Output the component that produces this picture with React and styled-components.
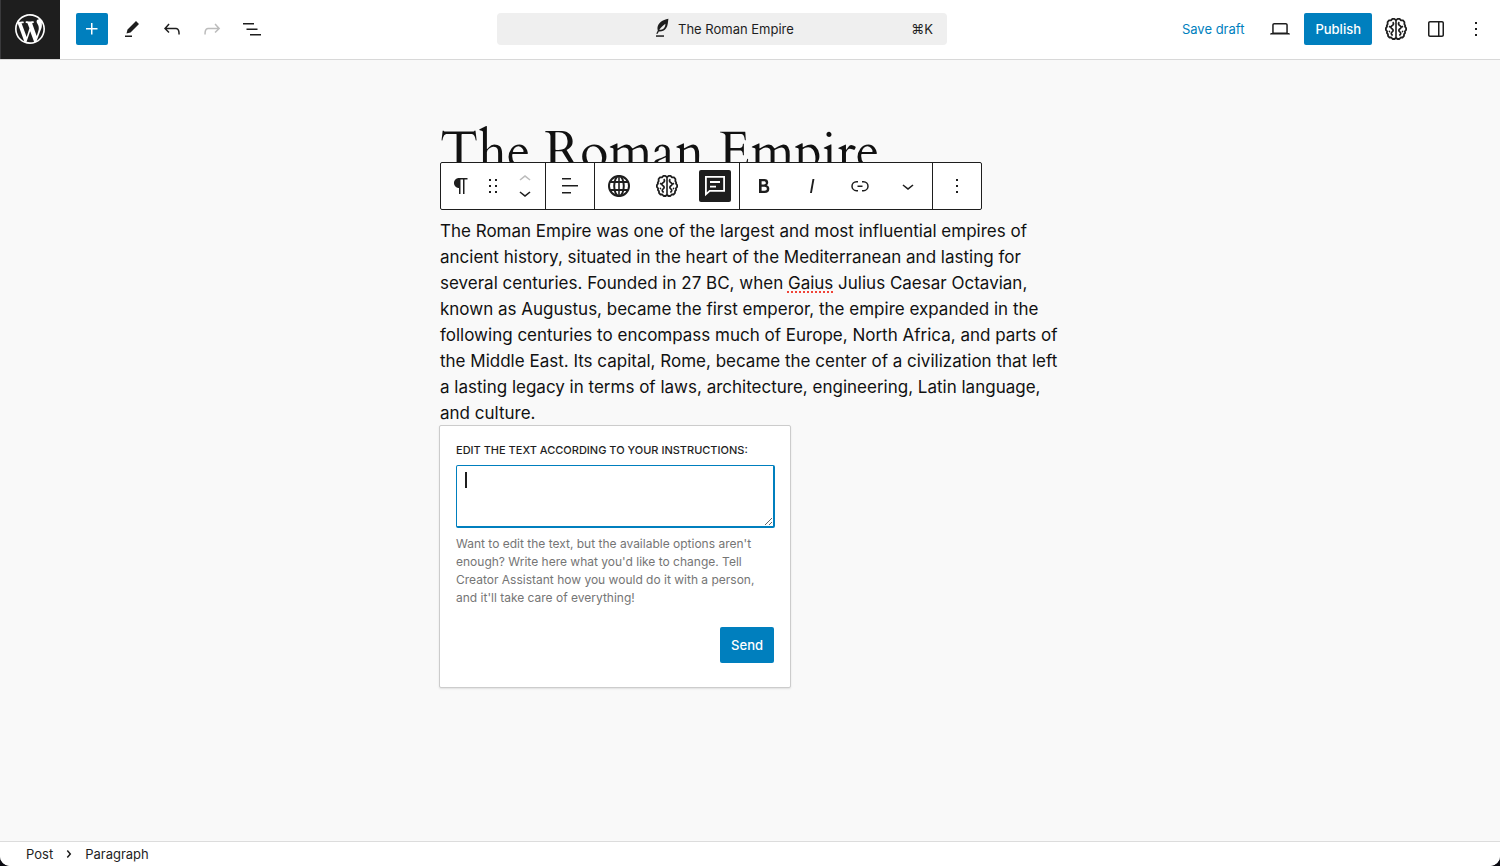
import React, { useState } from "react";
import styled, { createGlobalStyle, css } from "styled-components";

const ink = "#1e1e1e";
const accent = "#007fbe";
const ui = `Inter, "Liberation Sans", sans-serif`;

const GlobalStyle = createGlobalStyle`
  *, *::before, *::after { box-sizing: border-box; }
  body { margin: 0; background: #0b0b12; color: ${ink}; font-family: ${ui}; font-size: 13px; }
  button, textarea { font: inherit; color: inherit; }
`;

const Editor = styled.div`
  display: flex;
  flex-direction: column;
  min-height: 100vh;
  background: #f9f9f9;
  border-radius: 0 0 10px 10px;
  overflow: hidden;
`;

/* Top bar */

const Header = styled.header`
  display: flex;
  align-items: stretch;
  height: 60px;
  background: #fff;
  border-bottom: 1px solid #d8d8d8;
`;

const SiteLink = styled.a`
  display: flex;
  align-items: center;
  justify-content: center;
  flex: none;
  width: 60px;
  padding-bottom: 1px;
  background: ${ink};
  box-shadow: inset 1px 0 #3a3a3c;
  color: #fff;
`;

const Tools = styled.div`
  display: flex;
  align-items: center;
  gap: 8px;
  flex: none;
  padding: 0 ${(p) => (p.$end ? 8 : 0)}px 1px ${(p) => (p.$end ? 0 : 16)}px;
`;

const HeaderCenter = styled.div`
  display: flex;
  align-items: center;
  justify-content: center;
  flex: 1;
  min-width: 0;
  padding-bottom: 1px;
`;

const IconButton = styled.button`
  display: inline-flex;
  align-items: center;
  justify-content: center;
  flex: none;
  width: 32px;
  height: 32px;
  padding: 0;
  border: 0;
  border-radius: 2px;
  background: transparent;
  color: ${ink};
  cursor: pointer;

  &:disabled { color: #bcbcbc; cursor: default; }

  ${(p) => p.$primary && css`background: ${accent}; color: #fff;`}
  ${(p) => p.$active && css`background: ${ink}; color: #fff;`}
`;

const TextButton = styled.button`
  height: 32px;
  padding: 0 6px;
  margin-right: 6px;
  border: 0;
  background: transparent;
  color: ${accent};
  cursor: pointer;
`;

const PrimaryButton = styled.button`
  height: ${(p) => (p.$tall ? 36 : 32)}px;
  padding: 0 11px;
  border: 0;
  border-radius: 2px;
  background: ${accent};
  color: #fff;
  font-weight: 500;
  cursor: pointer;
`;

const DocumentBar = styled.button`
  display: grid;
  grid-template-columns: 1fr auto 1fr;
  align-items: center;
  width: 450px;
  min-width: 0;
  height: 32px;
  padding: 0 14px;
  border: 0;
  border-radius: 4px;
  background: #efefef;
  cursor: pointer;
`;

const DocumentName = styled.span`
  grid-column: 2;
  display: flex;
  align-items: center;
  gap: 4px;
`;

const Shortcut = styled.span`
  justify-self: end;
`;

/* Canvas */

const Canvas = styled.main`
  flex: 1;
  padding: 60px 24px;
`;

const Content = styled.div`
  max-width: 620px;
  margin: 0 auto;
`;

const Title = styled.h1`
  margin: 0 0 34px;
  color: #111;
  font-family: Cardo, "Liberation Serif", serif;
  font-size: 52px;
  font-weight: 400;
  line-height: 64px;
`;

const Block = styled.div`
  position: relative;
`;

const Paragraph = styled.p`
  margin: 0;
  color: #111;
  font-size: 17px;
  line-height: 26px;
`;

const Misspelled = styled.span`
  text-decoration: underline dotted #f04438 2px;
  text-underline-offset: 2px;
  text-decoration-skip-ink: none;
`;

/* Floating block toolbar */

const BlockToolbar = styled.div`
  position: absolute;
  left: 0;
  bottom: calc(100% + 8px);
  display: flex;
  height: 48px;
  border: 1px solid ${ink};
  border-radius: 2px;
  background: #fff;
`;

const Group = styled.div`
  display: flex;
  align-items: center;
  padding: 0 ${(p) => (p.$compact ? 4 : 8)}px;
  gap: ${(p) => (p.$compact ? 0 : 16)}px;

  & + & { border-left: 1px solid ${ink}; }
`;

const Movers = styled.div`
  display: flex;
  flex-direction: column;
`;

const MoverButton = styled(IconButton)`
  height: 14px;
`;

/* Instruction popover */

const Popover = styled.form`
  position: absolute;
  top: 100%;
  left: -1px;
  width: 352px;
  margin-top: -1px;
  padding: 16px 15px 24px 16px;
  border: 1px solid #ccc;
  border-radius: 2px;
  background: #fff;
  box-shadow: 0 1px 2px rgba(0, 0, 0, 0.1);
`;

const Label = styled.label`
  display: block;
  margin-bottom: 7px;
  font-size: 11px;
  font-weight: 500;
  line-height: 16px;
  text-transform: uppercase;
`;

const Field = styled.div`
  position: relative;
  display: flex;
`;

const TextArea = styled.textarea`
  width: 100%;
  height: 63px;
  padding: 6px 8px;
  border: 1px solid ${accent};
  border-right-width: 2px;
  border-bottom-width: 2px;
  border-radius: 2px;
  outline: 0;
  background: #fff;
  line-height: 18px;
  resize: vertical;
`;

const Caret = styled.span`
  position: absolute;
  top: 7px;
  left: 9px;
  width: 2px;
  height: 16px;
  background: ${ink};
  pointer-events: none;
`;

const Help = styled.p`
  margin: 7px 0 20px;
  color: #757575;
  font-size: 12px;
  line-height: 18px;
`;

const Actions = styled.div`
  display: flex;
  justify-content: flex-end;
  padding-right: 1px;
`;

/* Footer */

const Breadcrumb = styled.nav`
  display: flex;
  align-items: center;
  gap: 4px;
  height: 25px;
  padding: 0 26px;
  border-top: 1px solid #dcdcdc;
  background: #fff;
`;

const Crumb = styled.button`
  padding: 0;
  border: 0;
  background: transparent;
  cursor: pointer;
`;

/* Icons */

const paths = {
  plus: "M11 12.5V17.5H12.5V12.5H17.5V11H12.5V6H11V11H6V12.5H11Z",
  pencil: "m19 7-3-3-8.5 8.5-1 4 4-1L19 7Zm-7 11.5H5V20h7v-1.5Z",
  undo: "M18.3 11.7c-.6-.6-1.4-.9-2.3-.9H6.7l2.9-3.3-1.1-1-4.5 5L8.5 16l1-1-2.7-2.7H16c.5 0 .9.2 1.3.5 1 1 1 3.4 1 4.5v.3h1.5v-.2c0-1.5 0-4.3-1.5-5.7z",
  redo: "M15.6 6.5l-1.1 1 2.9 3.3H8c-.9 0-1.7.3-2.3.9-1.4 1.5-1.4 4.2-1.4 5.6v.2h1.5v-.3c0-1.1 0-3.5 1-4.5.3-.3.7-.5 1.3-.5h9.2L14.5 15l1.1 1.1 4.6-4.6-4.6-5z",
  list: "M3 6h11v1.5H3V6Zm3.5 5.5h11V13h-11v-1.5ZM21 17H10v1.5h11V17Z",
  laptop: "M20.5 16h-.7V8c0-1.1-.9-2-2-2H6.2c-1.1 0-2 .9-2 2v8h-.7c-.8 0-1.5.7-1.5 1.5h20c0-.8-.7-1.5-1.5-1.5zM5.7 8c0-.3.2-.5.5-.5h11.6c.3 0 .5.2.5.5v7.6H5.7V8z",
  sidebar: "M18 4H6c-1.1 0-2 .9-2 2v12c0 1.1.9 2 2 2h12c1.1 0 2-.9 2-2V6c0-1.1-.9-2-2-2zm-4 14.5H6c-.3 0-.5-.2-.5-.5V6c0-.3.2-.5.5-.5h8v13zm4.5-.5c0 .3-.2.5-.5.5h-2.5v-13H18c.3 0 .5.2.5.5v12z",
  more: "M13 19h-2v-2h2v2zm0-6h-2v-2h2v2zm0-6h-2V5h2v2z",
  paragraph: "m9.99609 14v-.2251l.00391.0001v6.225h1.5v-14.5h2.5v14.5h1.5v-14.5h3v-1.5h-8.50391c-2.76142 0-5 2.23858-5 5 0 2.7614 2.23858 5 5 5z",
  drag: "M8 7h2V5H8v2zm0 6h2v-2H8v2zm0 6h2v-2H8v2zm6-14v2h2V5h-2zm0 8h2v-2h-2v2zm0 6h2v-2h-2v2z",
  up: "M6.5 12.4L12 8l5.5 4.4-.9 1.2L12 10l-4.5 3.6-1-1.2z",
  down: "M17.5 11.6L12 16l-5.5-4.4.9-1.2L12 14l4.5-3.6 1 1.2z",
  align: "M13 5.5H4V4h9v1.5Zm7 7H4V11h16v1.5Zm-7 7H4V18h9v1.5Z",
  bold: "M14.7 11.3c1-.6 1.5-1.6 1.5-3 0-2.3-1.3-3.4-4-3.4H7v14h5.8c1.4 0 2.5-.3 3.3-1 .8-.7 1.2-1.7 1.2-2.9.1-1.9-.8-3.1-2.6-3.7zm-5.1-4h2.3c.6 0 1.1.1 1.4.4.3.3.5.7.5 1.2s-.2 1-.5 1.2c-.3.3-.8.4-1.4.4H9.6V7.3zm4.6 9c-.4.3-1 .4-1.7.4H9.6v-3.9h2.9c.7 0 1.3.2 1.7.5.4.3.6.8.6 1.5s-.2 1.2-.6 1.5z",
  italic: "M12.5 5L10 19h1.9l2.5-14z",
  link: "M10 17.389H8.444A5.194 5.194 0 1 1 8.444 7H10v1.5H8.444a3.694 3.694 0 0 0 0 7.389H10v1.5ZM14 7h1.556a5.194 5.194 0 0 1 0 10.39H14v-1.5h1.556a3.694 3.694 0 0 0 0-7.39H14V7Zm-4.5 6h5v-1.5h-5V13Z",
  crumb: "M10.8622 8.04053L14.2805 12.0286L10.8622 16.0167L9.72327 15.0405L12.3049 12.0286L9.72327 9.01672L10.8622 8.04053Z",
};

const Icon = ({ name, size = 24 }) => (
  <svg width={size} height={size} viewBox="0 0 24 24" fill="currentColor" aria-hidden="true">
    <path d={paths[name]} />
  </svg>
);

const WordPressLogo = () => (
  <svg width="36" height="36" viewBox="-2 -2 24 24" fill="currentColor" aria-hidden="true">
    <path d="M20 10c0-5.51-4.49-10-10-10C4.48 0 0 4.49 0 10c0 5.52 4.48 10 10 10 5.51 0 10-4.48 10-10zM7.78 15.37L4.37 6.22c.55-.02 1.17-.08 1.17-.08.5-.06.44-1.13-.06-1.11 0 0-1.45.11-2.37.11-.18 0-.37 0-.58-.01C4.12 2.69 6.87 1.11 10 1.11c2.33 0 4.45.87 6.05 2.34-.68-.11-1.65.39-1.65 1.58 0 .74.45 1.36.9 2.1.35.61.55 1.36.55 2.46 0 1.49-1.4 5-1.4 5l-3.03-8.37c.54-.02.82-.17.82-.17.5-.05.44-1.25-.06-1.22 0 0-1.44.12-2.38.12-.87 0-2.33-.12-2.33-.12-.5-.03-.56 1.2-.06 1.22l.92.08 1.26 3.41zM17.41 10c.24-.64.74-1.87.43-4.25.7 1.29 1.05 2.71 1.05 4.25 0 3.29-1.73 6.24-4.4 7.78.97-2.59 1.94-5.2 2.92-7.78zM6.1 18.09C3.12 16.65 1.11 13.53 1.11 10c0-1.3.23-2.48.72-3.59C3.25 10.3 4.67 14.2 6.1 18.09zm4.03-6.63l2.58 6.98c-.86.29-1.76.45-2.71.45-.79 0-1.57-.11-2.29-.33.81-2.38 1.62-4.74 2.42-7.1z" />
  </svg>
);

const Feather = () => (
  <svg width="24" height="24" viewBox="0 0 24 24" aria-hidden="true">
    <path d="M18.4 1.8C12.3 2.8 8.3 6 7.5 10.2c-.2 1.3 0 2.3.3 3.3l-1.6 3.2h1.5l1.1-2.200c3 .3 5.600-.9 7.300-3.200 1.900-2.600 1.800-6 2.300-9.500ZM9.300 13c1.300-2.400 3.500-4.300 6.100-6.300.1 3.700-2 6.100-6.100 6.300Z" fill="currentColor" fillRule="evenodd" />
    <path d="M6 18.3h8v1.5H6z" fill="currentColor" />
  </svg>
);

const Globe = () => (
  <svg width="24" height="24" viewBox="0 0 24 24" fill="none" stroke="currentColor" strokeWidth="2" aria-hidden="true">
    <circle cx="12" cy="12" r="10" />
    <ellipse cx="12" cy="12" rx="4.8" ry="10" />
    <path d="M12 2v20" strokeWidth="1.6" />
    <path d="M3 8h18M3 16h18" />
  </svg>
);

const BrainHalf = () => (
  <>
    <path d="M12 3.2 10.400 1.900H8.400L7 3.400H5L3.600 5V7.200L2.800 8.600 3 9.700 1.900 11v2l1.200 1.300-.2 1.700 1 1.200.2 2L5.500 20.500H7.300L8.600 22h2L12 20.800" strokeWidth="1.800" strokeLinejoin="round" />
    <path d="M8.600 5.300c1.300.9 1.200 2.100 0 2.900-2.200 1.200-2.200 2.500-.6 3.600 1.500 1 1.500 2 .2 3-1.500 1.200-1.200 2.600.5 3.600M5 9.300l1.300.8M4.800 14.800l1.300-.6" strokeWidth="1.700" />
  </>
);

const Brain = () => (
  <svg width="24" height="24" viewBox="0 0 24 24" fill="none" stroke="currentColor" aria-hidden="true">
    <BrainHalf />
    <g transform="matrix(-1 0 0 1 24 0)"><BrainHalf /></g>
    <path d="M12 3v18" strokeWidth="1.6" />
  </svg>
);

const Comment = () => (
  <svg width="24" height="24" viewBox="0 0 24 24" fill="none" stroke="currentColor" strokeWidth="1.8" aria-hidden="true">
    <path d="M2.9 2.9h18.2v14H6.7L2.9 20.3V2.9Z" />
    <path d="M7 8h10M7 12.7h6" />
  </svg>
);

export default function App() {
  const [instructions, setInstructions] = useState("");

  return (
    <>
      <GlobalStyle />
      <Editor>
        <Header>
          <SiteLink href="#" aria-label="View posts"><WordPressLogo /></SiteLink>
          <Tools>
            <IconButton type="button" $primary aria-label="Add block"><Icon name="plus" /></IconButton>
            <IconButton type="button" aria-label="Tools"><Icon name="pencil" /></IconButton>
            <IconButton type="button" aria-label="Undo"><Icon name="undo" /></IconButton>
            <IconButton type="button" aria-label="Redo" disabled><Icon name="redo" /></IconButton>
            <IconButton type="button" aria-label="Document overview"><Icon name="list" /></IconButton>
          </Tools>
          <HeaderCenter>
            <DocumentBar type="button">
              <DocumentName><Feather />The Roman Empire</DocumentName>
              <Shortcut>⌘K</Shortcut>
            </DocumentBar>
          </HeaderCenter>
          <Tools $end>
            <TextButton type="button">Save draft</TextButton>
            <IconButton type="button" aria-label="Preview"><Icon name="laptop" /></IconButton>
            <PrimaryButton type="button">Publish</PrimaryButton>
            <IconButton type="button" aria-label="Creator Assistant"><Brain /></IconButton>
            <IconButton type="button" aria-label="Settings"><Icon name="sidebar" /></IconButton>
            <IconButton type="button" aria-label="Options"><Icon name="more" /></IconButton>
          </Tools>
        </Header>

        <Canvas>
          <Content>
            <Title>The Roman Empire</Title>
            <Block>
              <Paragraph>
                The Roman Empire was one of the largest and most influential empires of ancient
                history, situated in the heart of the Mediterranean and lasting for several
                centuries. Founded in 27 BC, when <Misspelled>Gaius</Misspelled> Julius Caesar
                Octavian, known as Augustus, became the first emperor, the empire expanded in the
                following centuries to encompass much of Europe, North Africa, and parts of the
                Middle East. Its capital, Rome, became the center of a civilization that left a
                lasting legacy in terms of laws, architecture, engineering, Latin language, and
                culture.
              </Paragraph>

              <BlockToolbar role="toolbar" aria-label="Block tools">
                <Group $compact>
                  <IconButton type="button" aria-label="Paragraph"><Icon name="paragraph" /></IconButton>
                  <IconButton type="button" aria-label="Drag"><Icon name="drag" /></IconButton>
                  <Movers>
                    <MoverButton type="button" aria-label="Move up" disabled><Icon name="up" /></MoverButton>
                    <MoverButton type="button" aria-label="Move down"><Icon name="down" /></MoverButton>
                  </Movers>
                </Group>
                <Group>
                  <IconButton type="button" aria-label="Align text"><Icon name="align" /></IconButton>
                </Group>
                <Group>
                  <IconButton type="button" aria-label="Translate"><Globe /></IconButton>
                  <IconButton type="button" aria-label="Assistant"><Brain /></IconButton>
                  <IconButton type="button" $active aria-label="Instructions"><Comment /></IconButton>
                </Group>
                <Group>
                  <IconButton type="button" aria-label="Bold"><Icon name="bold" /></IconButton>
                  <IconButton type="button" aria-label="Italic"><Icon name="italic" /></IconButton>
                  <IconButton type="button" aria-label="Link"><Icon name="link" /></IconButton>
                  <IconButton type="button" aria-label="More"><Icon name="down" /></IconButton>
                </Group>
                <Group>
                  <IconButton type="button" aria-label="Block options"><Icon name="more" /></IconButton>
                </Group>
              </BlockToolbar>

              <Popover onSubmit={(e) => e.preventDefault()}>
                <Label htmlFor="instructions">Edit the text according to your instructions:</Label>
                <Field>
                  <TextArea
                    id="instructions"
                    value={instructions}
                    onChange={(e) => setInstructions(e.target.value)}
                  />
                  {instructions === "" && <Caret aria-hidden="true" />}
                </Field>
                <Help>
                  Want to edit the text, but the available options aren't enough? Write here what
                  you'd like to change. Tell Creator Assistant how you would do it with a person,
                  and it'll take care of everything!
                </Help>
                <Actions>
                  <PrimaryButton type="submit" $tall>Send</PrimaryButton>
                </Actions>
              </Popover>
            </Block>
          </Content>
        </Canvas>

        <Breadcrumb aria-label="Block breadcrumb">
          <Crumb type="button">Post</Crumb>
          <Icon name="crumb" />
          <Crumb type="button">Paragraph</Crumb>
        </Breadcrumb>
      </Editor>
    </>
  );
}
